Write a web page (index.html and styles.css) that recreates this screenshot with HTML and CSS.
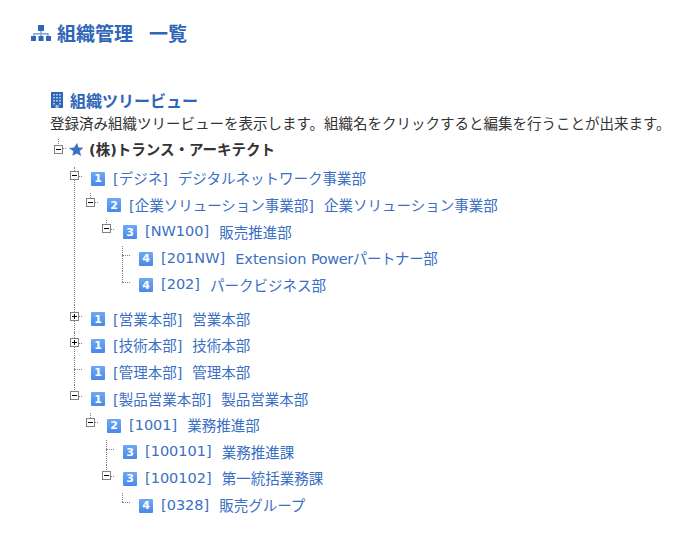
FILE: index.html
```html
<!DOCTYPE html>
<html lang="ja">
<head>
    <meta charset="UTF-8">
    <title>組織管理 一覧</title>
    <link rel="stylesheet" href="styles.css">
</head>
<body>
    <div class="page">
        <h1 class="page-title">
            <svg class="title-icon" viewBox="0 0 20 16">
                <path class="title-icon-lines" d="M9.300 6h1.400v2H17.700v3h-1.400V9.400H10.700V11H9.300V9.400H3.700V11H2.300V8h7z"/>
                <rect x="7" y="0" width="6" height="6"/>
                <rect x="0" y="11" width="5" height="5"/>
                <rect x="7.500" y="11" width="5" height="5"/>
                <rect x="15" y="11" width="5" height="5"/>
            </svg>
            <span>組織管理</span><span class="title-sub">一覧</span>
        </h1>

        <h2 class="section-title">
            <svg class="section-icon" viewBox="0 0 12 16"><rect width="12" height="16"/><path class="windows" d="M2 2h2v1.500H2zM5 2h2v1.500H5zM8 2h2v1.500H8zM2 5h2v1.500H2zM5 5h2v1.500H5zM8 5h2v1.500H8zM2 8h2v1.500H2zM5 8h2v1.500H5zM8 8h2v1.500H8zM2 11h2v1.500H2zM8 11h2v1.500H8zM4.500 13h3v3h-3z"/></svg>
            組織ツリービュー
        </h2>
        <p class="description">登録済み組織ツリービューを表示します。組織名をクリックすると編集を行うことが出来ます。</p>

        <ul class="tree root">
            <li>
                <div class="row root-row">
                    <span class="toggle open"></span>
                    <svg class="star" viewBox="0 0 24 24"><path stroke-linejoin="round" d="M13.500 1l2.500 7 7.500.5-5.500 5 2 8-6.500-4-7 3.500 1.500-7.500L1 9l8-.7z"/></svg>
                    <span class="root-name">(株)トランス・アーキテクト</span>
                </div>
                <ul class="tree">
                    <li class="gap-after">
                        <div class="row">
                            <span class="toggle open"></span><span class="level">1</span>
                            <a class="code">[デジネ]</a><a>デジタルネットワーク事業部</a>
                        </div>
                        <ul class="tree">
                            <li>
                                <div class="row">
                                    <span class="toggle open"></span><span class="level">2</span>
                                    <a class="code">[企業ソリューション事業部]</a><a>企業ソリューション事業部</a>
                                </div>
                                <ul class="tree">
                                    <li>
                                        <div class="row">
                                            <span class="toggle open"></span><span class="level">3</span>
                                            <a class="code">[NW100]</a><a>販売推進部</a>
                                        </div>
                                        <ul class="tree">
                                            <li>
                                                <div class="row">
                                                    <span class="level">4</span>
                                                    <a class="code">[201NW]</a><a>Extension <span class="narrow">Powerパートナー部</span></a>
                                                </div>
                                            </li>
                                            <li>
                                                <div class="row">
                                                    <span class="level">4</span>
                                                    <a class="code">[202]</a><a>パークビジネス部</a>
                                                </div>
                                            </li>
                                        </ul>
                                    </li>
                                </ul>
                            </li>
                        </ul>
                    </li>
                    <li>
                        <div class="row">
                            <span class="toggle closed"></span><span class="level">1</span>
                            <a class="code">[営業本部]</a><a>営業本部</a>
                        </div>
                    </li>
                    <li>
                        <div class="row">
                            <span class="toggle closed"></span><span class="level">1</span>
                            <a class="code">[技術本部]</a><a>技術本部</a>
                        </div>
                    </li>
                    <li>
                        <div class="row">
                            <span class="level">1</span>
                            <a class="code">[管理本部]</a><a>管理本部</a>
                        </div>
                    </li>
                    <li>
                        <div class="row">
                            <span class="toggle open"></span><span class="level">1</span>
                            <a class="code">[製品営業本部]</a><a>製品営業本部</a>
                        </div>
                        <ul class="tree">
                            <li>
                                <div class="row">
                                    <span class="toggle open"></span><span class="level">2</span>
                                    <a class="code">[1001]</a><a>業務推進部</a>
                                </div>
                                <ul class="tree">
                                    <li>
                                        <div class="row">
                                            <span class="level">3</span>
                                            <a class="code">[100101]</a><a>業務推進課</a>
                                        </div>
                                    </li>
                                    <li>
                                        <div class="row">
                                            <span class="toggle open"></span><span class="level">3</span>
                                            <a class="code">[100102]</a><a>第一統括業務課</a>
                                        </div>
                                        <ul class="tree">
                                            <li>
                                                <div class="row">
                                                    <span class="level">4</span>
                                                    <a class="code">[0328]</a><a>販売グループ</a>
                                                </div>
                                            </li>
                                        </ul>
                                    </li>
                                </ul>
                            </li>
                        </ul>
                    </li>
                </ul>
            </li>
        </ul>
    </div>
</body>
</html>
```

FILE: styles.css
```css
body {
    margin: 0;
    background-color: #fff;
    color: #333;
    font-family: "DejaVu Sans", "Noto Sans CJK JP", sans-serif;
    font-size: 14.500px;
}

.page {
    padding: 20px 0 0 31px;
}

.page-title {
    display: flex;
    align-items: center;
    margin: 0 0 45px;
    height: 25px;
    font-size: 19px;
    font-weight: bold;
    color: #2e66b8;
}

.title-icon {
    width: 20px;
    height: 16px;
    margin-right: 6px;
    fill: #2e66b8;
}

.title-icon-lines {
    fill: #7d9fd6;
}

.title-sub {
    margin-left: 16px;
}

.section-title {
    display: flex;
    align-items: center;
    gap: 7px;
    margin: 0 0 0 20px;
    height: 20px;
    font-size: 16px;
    font-weight: bold;
    color: #2e66b8;
}

.section-icon {
    width: 12px;
    height: 16px;
    fill: #2e66b8;
}

.windows {
    fill: #a9c3ec;
}

.description {
    margin: 4px 0 0 19px;
    line-height: 20px;
}

/* tree */
.tree {
    list-style: none;
    margin: 0;
    padding: 0;
}

.tree .tree {
    padding-left: 16px;
}

.root {
    margin: 3px 0 0 23px;
}

.tree li {
    position: relative;
}

.gap-after {
    padding-bottom: 7.500px;
}

/* vertical connector, stops at the row centre on the last child */
.tree li::before {
    content: "";
    position: absolute;
    left: 4px;
    top: 0;
    bottom: 0;
    border-left: 1px dotted #808080;
}

.tree li:first-child::before {
    top: 2px;
}

.tree li:last-child::before {
    bottom: auto;
    height: 11px;
}

.tree li:only-child::before {
    height: 9px;
}

.row {
    position: relative;
    display: flex;
    align-items: center;
    height: 26.600px;
    padding-left: 16px;
}

.root-row {
    height: 27.600px;
}

/* horizontal connector */
.row::before {
    content: "";
    position: absolute;
    left: 4px;
    top: 11px;
    width: 8px;
    border-top: 1px dotted #808080;
}

.toggle {
    position: absolute;
    left: 0;
    top: 6.600px;
    z-index: 1;
    box-sizing: border-box;
    width: 9px;
    height: 9px;
    border: 1px solid #808080;
    background: #fff no-repeat center;
}

.toggle.open {
    background-image: linear-gradient(#000, #000);
    background-size: 5px 1px;
}

.toggle.closed {
    background-image: linear-gradient(#000, #000), linear-gradient(#000, #000);
    background-size: 5px 1px, 1px 5px;
}

.root-row .toggle {
    top: 8px;
}

.star {
    width: 14px;
    height: 14px;
    margin: 0 6px 1px -1px;
    fill: #3a6fc4;
    stroke: #3a6fc4;
}

.root-name {
    margin-bottom: 4px;
    font-weight: bold;
}

.level {
    display: inline-flex;
    align-items: center;
    justify-content: center;
    width: 14px;
    height: 14px;
    margin: 2px 8px 0 5px;
    border-radius: 1px;
    background: linear-gradient(#6ea9f5, #4a88e8);
    color: #fff;
    font-family: "DejaVu Sans", sans-serif;
    font-size: 11px;
    font-weight: bold;
    line-height: 1;
}

a {
    color: #3a6fc4;
}

.code {
    margin-right: 10px;
}

.narrow {
    letter-spacing: -0.4px;
}
```
